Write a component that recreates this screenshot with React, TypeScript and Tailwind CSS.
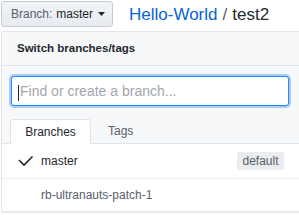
import React from "react";

export default function App() {
  return (
    <div className="w-[299px] h-[215px] overflow-hidden bg-white pl-px pt-px font-['Liberation_Sans',Arial,sans-serif]">
      <div className="flex items-center h-[26px]">
        <div className="w-[112px] h-[26px] shrink-0 border border-[#c8cacc] rounded-[3px] bg-gradient-to-b from-[#f2f5f8] to-[#e6ebf1] flex items-center pl-[9px] text-[12px]">
          <span className="text-[#586069]">Branch:</span>
          <span className="ml-[4px] text-[#1b1f23]">master</span>
          <svg className="ml-[5px]" width="7" height="4" viewBox="0 0 7 4">
            <path d="M0 0h7L3.5 4z" fill="#24292e" />
          </svg>
        </div>
        <div className="ml-[16px] text-[17px] whitespace-nowrap leading-none">
          <span className="text-[#0366d6]">Hello-World</span>
          <span className="text-[#586069] mx-[5px]">/</span>
          <span className="text-[#24292e]">test2</span>
        </div>
      </div>

      <div className="mt-[4px] w-[330px] border border-[#e1e4e8] rounded-tl-[3px]">
        <div className="h-[34px] bg-[#f6f8fa] border-b border-[#e1e4e8] flex items-center pl-[15px] text-[11.5px] font-semibold text-[#24292e]">
          Switch branches/tags
        </div>
        <div className="bg-[#f6f8fa]">
          <div className="pt-[10px] pl-[9px]">
            <div className="w-[278px] h-[30px] border border-[#2188ff] rounded-[3px] bg-white shadow-[0_0_0_2px_rgba(3,102,214,0.3)] flex items-center pl-[6px]">
              <div className="w-px h-[16px] bg-[#24292e] mt-[3px]" />
              <span className="ml-px text-[14px] text-[#a2a6ab] whitespace-nowrap">Find or create a branch...</span>
            </div>
          </div>
          <div className="mt-[13px] h-[25px] flex pl-[8px] border-b border-[#e1e4e8] text-[12px]">
            <div className="w-[81px] h-[25px] -mb-px bg-white border border-b-0 border-[#e1e4e8] rounded-t-[3px] flex items-center justify-center text-[#24292e]">
              Branches
            </div>
            <div className="pl-[17px] flex items-center text-[#586069]">Tags</div>
          </div>
        </div>
        <div className="bg-white text-[12px]">
          <div className="h-[35px] border-b border-[#eaecef] flex items-center pl-[16px]">
            <svg width="16" height="12" viewBox="0 0 16 12" className="shrink-0">
              <polyline points="1,5 6,10 14.5,1.5" fill="none" stroke="#24292e" strokeWidth="1.6" />
            </svg>
            <span className="ml-[7px] text-[#24292e]">master</span>
            <span className="ml-auto mr-[46px] w-[47px] h-[18px] rounded-[2px] bg-[#eaecef] text-[#586069] flex items-center justify-center">
              default
            </span>
          </div>
          <div className="h-[33px] border-b border-[#eaecef] flex items-center pl-[39px] text-[#586069]">
            rb-ultranauts-patch-1
          </div>
        </div>
      </div>
    </div>
  );
}
